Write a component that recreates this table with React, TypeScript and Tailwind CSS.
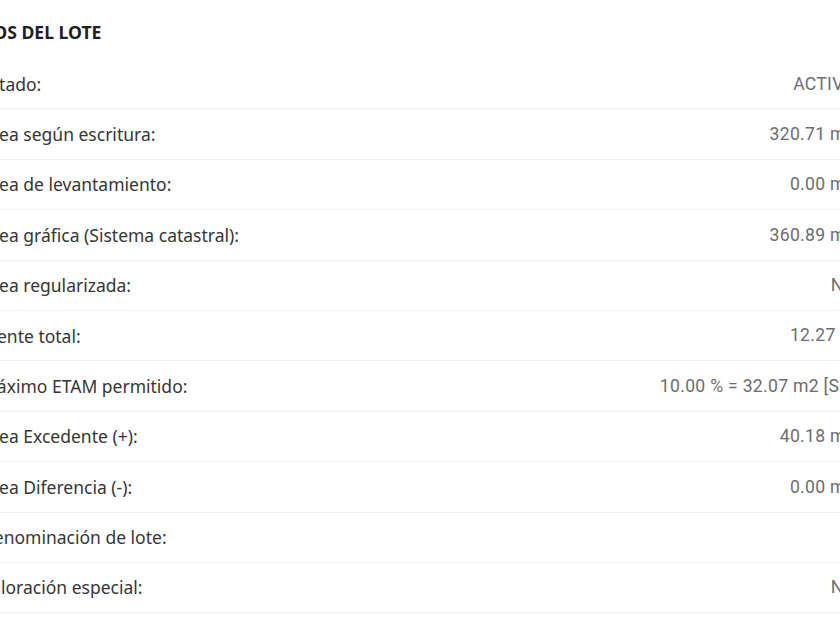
import React from 'react';

interface Row {
  label: string;
  value: string;
}

const rows: Row[] = [
  { label: 'Estado:', value: 'ACTIVO' },
  { label: 'Área según escritura:', value: '320.71 m2' },
  { label: 'Área de levantamiento:', value: '0.00 m2' },
  { label: 'Área gráfica (Sistema catastral):', value: '360.89 m2' },
  { label: 'Área regularizada:', value: 'NO' },
  { label: 'Frente total:', value: '12.27 m' },
  { label: 'Máximo ETAM permitido:', value: '10.00 % = 32.07 m2 [SU]' },
  { label: 'Área Excedente (+):', value: '40.18 m2' },
  { label: 'Área Diferencia (-):', value: '0.00 m2' },
  { label: 'Denominación de lote:', value: '' },
  { label: 'Valoración especial:', value: 'NO' },
];

export default function App() {
  return (
    <div className="w-[840px] h-[630px] overflow-hidden bg-white">
      <div className="ml-[-19px] w-[875px] font-['Noto_Sans',sans-serif]">
        {/* Title */}
        <div className="h-[59px] pt-[20px]">
          <h2 className="ml-[-21px] text-[17.6px] leading-[24px] font-bold text-[#1f1f1f]">DATOS DEL LOTE</h2>
        </div>

        {rows.map((row) => (
          <div
            key={row.label}
            className="flex h-[50.4px] items-center justify-between border-b border-[#f2f2f2]"
          >
            <span className="text-[17.5px] text-[#363636]">{row.label}</span>
            <span className="text-[17.6px] tracking-[0.3px] text-[#6e6e6e] font-['Roboto',sans-serif]">{row.value}</span>
          </div>
        ))}
      </div>
    </div>
  );
}
